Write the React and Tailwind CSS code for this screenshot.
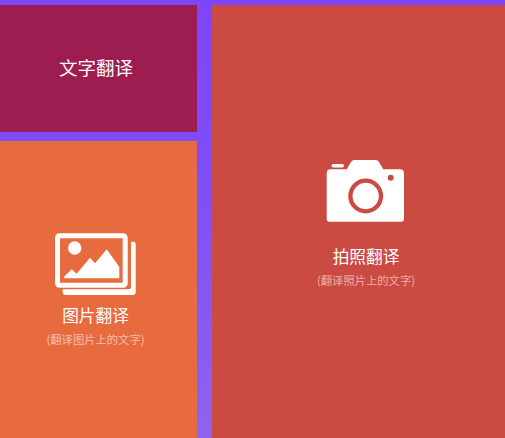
import React from "react";

const fontStack = "[font-family:'Noto_Sans_CJK_SC','Noto_Sans',sans-serif]";

function PicturesIcon() {
  return (
    <svg width="83" height="64" viewBox="0 0 83 64" className="block">
      {/* stacked sheet behind */}
      <path
        d="M8.7 57.3H75a2 2 0 0 0 2-2V9.7h2.2a2.5 2.5 0 0 1 2.5 2.5V60a3 3 0 0 1-3 3H11.7a3 3 0 0 1-3-3z"
        fill="#fff"
      />
      {/* front frame */}
      <rect x="3.5" y="3.8" width="67.7" height="49.4" rx="2" fill="none" stroke="#fff" strokeWidth="5" />
      <circle cx="20.7" cy="16" r="6.7" fill="#fff" />
      <path
        d="M10.3 46.3 V44.5 L17.7 37.3 L22.7 41.7 L36 25.7 L41 31.3 L52.7 17.3 L65.3 35 V46.3 Z"
        fill="#fff"
      />
    </svg>
  );
}

function CameraIcon() {
  return (
    <svg width="80" height="64" viewBox="0 0 80 64" className="block">
      <rect x="5.5" y="5" width="12.5" height="3.4" rx="1.7" fill="#fff" />
      <path
        d="M0.7 14.3a4 4 0 0 1 4-4H20.7L25 3a4 4 0 0 1 3.4-2H49.6a4 4 0 0 1 3.4 2L57.3 10.3H74a4 4 0 0 1 4 4V60a2.7 2.7 0 0 1-2.7 2.7H3.4A2.7 2.7 0 0 1 0.7 60z"
        fill="#fff"
      />
      <circle cx="39.7" cy="37" r="15.3" fill="#fff" stroke="#cb4a42" strokeWidth="4.3" />
      <circle cx="64.7" cy="18.7" r="3" fill="#cb4a42" />
    </svg>
  );
}

function App() {
  return (
    <div
      className={`flex h-[438px] w-[505px] gap-[15px] overflow-hidden bg-gradient-to-b from-[#7d45f8] via-[#8150f6] to-[#8f63ee] pt-[5px] ${fontStack}`}
    >
      <div className="flex w-[197px] flex-col gap-[9px]">
        <div className="flex h-[127px] items-center justify-center bg-[#9e1d51] pr-[5px] pb-[2px] text-[18.5px] text-white">
          文字翻译
        </div>
        <div className="flex flex-1 flex-col items-center justify-center bg-[#e86a3f] pr-[6px]">
          <PicturesIcon />
          <div className="mt-[6px] text-[16.7px] leading-[26px] text-white">图片翻译</div>
          <div className="mt-[3px] text-[11.3px] leading-[16px] text-white/55">(翻译图片上的文字)</div>
        </div>
      </div>
      <div className="flex flex-1 flex-col items-center justify-center bg-[#cb4a42] pt-[3px] pl-[15px]">
        <CameraIcon />
        <div className="mt-[20px] text-[16.7px] leading-[26px] text-white">拍照翻译</div>
        <div className="mt-[3px] text-[11.3px] leading-[16px] text-white/55">(翻译照片上的文字)</div>
      </div>
    </div>
  );
}

export default App;
